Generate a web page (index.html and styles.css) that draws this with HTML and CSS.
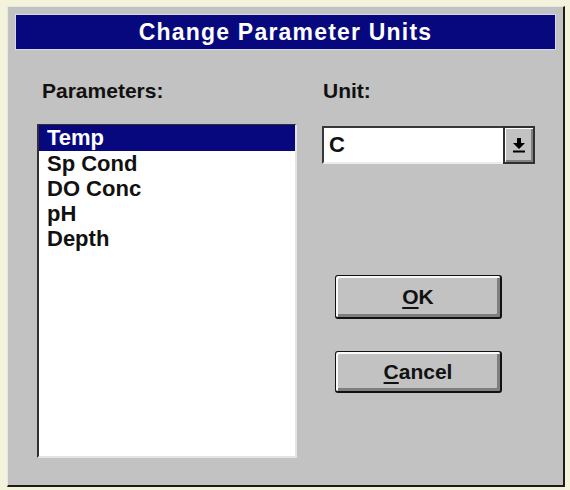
FILE: index.html
```html
<!DOCTYPE html>
<html>
<head>
<meta charset="utf-8">
<link rel="stylesheet" href="styles.css">
</head>
<body>
<div class="dialog">
  <div class="titlebar">Change Parameter Units</div>
  <div class="content">
    <div class="col-left">
      <div class="label label-params">Parameters:</div>
      <ul class="listbox">
        <li class="item selected">Temp</li>
        <li class="item">Sp Cond</li>
        <li class="item">DO Conc</li>
        <li class="item">pH</li>
        <li class="item">Depth</li>
      </ul>
    </div>
    <div class="col-right">
      <div class="label label-unit">Unit:</div>
      <div class="combo">
        <div class="combo-field">C</div>
        <div class="combo-btn">
          <svg width="12" height="15" viewBox="0 0 12 15"><polygon points="4,0 8,0 8,5 12,5 6,11 0,5 4,5" fill="#000"/><rect x="0" y="12.5" width="12" height="2" fill="#000"/></svg>
        </div>
      </div>
      <div class="btn btn-ok"><span><u>O</u>K</span></div>
      <div class="btn btn-cancel"><span><u>C</u>ancel</span></div>
    </div>
  </div>
</div>
</body>
</html>
```
FILE: styles.css
```css
html, body {
  margin: 0;
  padding: 0;
}
body {
  background: #f3f3dc;
  width: 570px;
  height: 490px;
  overflow: hidden;
  font-family: "Liberation Sans", Arial, sans-serif;
}
.dialog {
  box-sizing: border-box;
  width: 558px;
  height: 481px;
  margin: 6px 0 0 7px;
  background: #c2c2c2;
  border-top: 1px solid #e6e6e6;
  border-left: 1px solid #e6e6e6;
  border-right: 2px solid #1c1c14;
  border-bottom: 2px solid #1c1c14;
  padding: 7px 7px 0 7px;
}
.titlebar {
  box-sizing: border-box;
  height: 36px;
  border: 1px solid #d6d6ee;
  background: #08087e;
  color: #fff;
  font-weight: bold;
  font-size: 23px;
  letter-spacing: 1.2px;
  display: flex;
  align-items: center;
  justify-content: center;
}
.content {
  display: flex;
  gap: 25px;
  margin: 29px 0 0 22px;
}
.col-left {
  width: 260px;
}
.col-right {
  width: 213px;
}
.label {
  font-weight: bold;
  font-size: 21px;
  line-height: 24px;
  color: #111;
}
.label-params {
  padding-left: 5px;
}
.label-unit {
  padding-left: 1px;
}
.listbox {
  list-style: none;
  margin: 21px 0 0 0;
  padding: 0;
  box-sizing: border-box;
  height: 334px;
  background: #fff;
  border-top: 1px solid #303030;
  border-left: 2px solid #303030;
  border-right: 2px solid #e4e4e4;
  border-bottom: 2px solid #e4e4e4;
}
.item {
  font-weight: bold;
  font-size: 22px;
  line-height: 25px;
  padding-left: 8px;
  color: #111;
}
.item.selected {
  background: #08087e;
  color: #fff;
  line-height: 26px;
}
.combo {
  display: flex;
  height: 38px;
  margin-top: 23px;
}
.combo-field {
  flex: 1;
  box-sizing: border-box;
  background: #fff;
  border-top: 2px solid #383838;
  border-left: 2px solid #383838;
  border-bottom: 2px solid #ececec;
  padding-left: 5px;
  font-weight: bold;
  font-size: 22px;
  display: flex;
  align-items: center;
  color: #111;
}
.combo-btn {
  box-sizing: border-box;
  width: 32px;
  border: 2px solid #303030;
  background: #c2c2c2;
  box-shadow: inset 1px 1px #fff, inset -2px -2px #808080;
  display: flex;
  align-items: center;
  justify-content: center;
}
.btn {
  box-sizing: border-box;
  width: 167px;
  margin-left: 13px;
  border: 1px solid #111;
  border-right-width: 2px;
  border-bottom-width: 2px;
  border-radius: 3px;
  background: #c2c2c2;
  box-shadow: inset 2px 2px #fafafa, inset -3px -3px #7e7e7e;
  display: flex;
  align-items: center;
  justify-content: center;
  font-weight: bold;
  font-size: 21px;
  color: #111;
}
.btn u {
  text-decoration-thickness: 2px;
  text-underline-offset: 3px;
}
.btn-ok {
  height: 44px;
  margin-top: 111px;
}
.btn-cancel {
  height: 42px;
  margin-top: 32px;
}
```
